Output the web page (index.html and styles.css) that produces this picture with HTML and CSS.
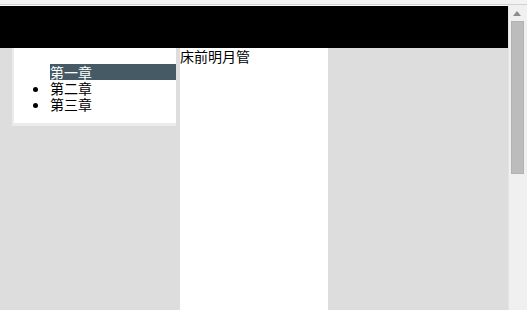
FILE: index.html
```html
<!DOCTYPE html>
<html lang="zh">
<head>
<meta charset="utf-8">
<title>目录</title>
<link rel="stylesheet" href="styles.css">
</head>
<body>
<div class="chrome"></div>
<div class="frame">
  <div class="page">
    <div class="header"></div>
    <div class="row">
      <div class="sidebar-wrap">
        <div class="sidebar">
          <ul class="menu">
            <li class="active">第一章</li>
            <li>第二章</li>
            <li>第三章</li>
          </ul>
        </div>
      </div>
      <div class="gap"></div>
      <div class="content">床前明月管</div>
    </div>
  </div>
  <div class="scrollbar">
    <div class="sb-btn"><span class="sb-arrow"></span></div>
    <div class="sb-thumb"></div>
  </div>
</div>
</body>
</html>
```

FILE: styles.css
```css
html, body {
  margin: 0;
  padding: 0;
}
body {
  background: #dddddd;
  font-family: "Noto Sans CJK SC", "Noto Sans", sans-serif;
  font-size: 14px;
  line-height: 16px;
  color: #000;
  width: 527px;
  height: 310px;
  overflow: hidden;
}
.chrome {
  height: 4px;
  background: #f2f2f2;
  border-bottom: 1px solid #d2d2d2;
}
.frame {
  display: flex;
  height: 305px;
}
.page {
  flex: 1;
  display: flex;
  flex-direction: column;
  background: #dddddd;
  border-top: 1px solid #fafafa;
}
.header {
  height: 42px;
  background: #000;
}
.row {
  flex: 1;
  display: flex;
  align-items: stretch;
}
.sidebar-wrap {
  width: 176px;
  box-sizing: border-box;
  padding-left: 12px;
  align-self: flex-start;
}
.sidebar {
  background: #fff;
  border-left: 2px solid #ebebeb;
  border-bottom: 3px solid #ebebeb;
  padding: 16px 0 11px 0;
}
.menu {
  margin: 0;
  padding-left: 36px;
  list-style: disc;
}
.menu li {
  height: 16px;
}
.menu li.active {
  background: #455a64;
  color: #fff;
}
.gap {
  width: 4px;
}
.content {
  width: 148px;
  background: #fff;
}
.scrollbar {
  width: 18px;
  background: #f0f0f0;
  border-left: 1px solid #e4e4e4;
  display: flex;
  flex-direction: column;
}
.sb-btn {
  height: 16px;
  display: flex;
  align-items: center;
  padding-left: 4px;
}
.sb-arrow {
  width: 0;
  height: 0;
  border-left: 4px solid transparent;
  border-right: 4px solid transparent;
  border-bottom: 5px solid #8c8c8c;
}
.sb-thumb {
  height: 151px;
  width: 11px;
  margin-left: 2px;
  background: #bcbcbc;
  border: 1px solid #b2b2b2;
}
```
